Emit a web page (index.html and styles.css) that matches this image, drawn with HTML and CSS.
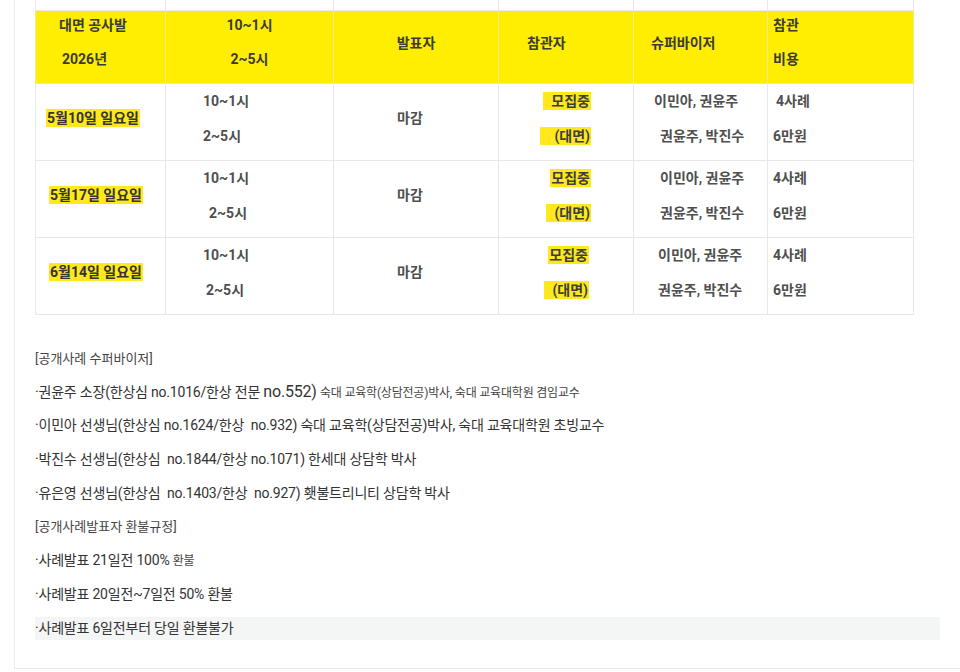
FILE: index.html
```html
<!DOCTYPE html>
<html lang="ko">
<head>
<meta charset="utf-8">
<link rel="stylesheet" href="styles.css">
</head>
<body>
<div class="page">
  <table class="sched">
    <colgroup>
      <col class="c1"><col class="c2"><col class="c3"><col class="c4"><col class="c5"><col class="c6">
    </colgroup>
    <tr class="stub"><td></td><td></td><td></td><td></td><td></td><td></td></tr>
    <tr class="head">
      <th class="h1"><div class="two">대면 공사발<br><span class="in1">2026년</span></div></th>
      <th class="h2"><div class="two">10~1시<br>2~5시</div></th>
      <th class="h3 one">발표자</th>
      <th class="h4 one">참관자</th>
      <th class="h5 one">슈퍼바이저</th>
      <th class="h6"><div class="two">참관<br>비용</div></th>
    </tr>
    <tr class="row">
      <td class="date one"><span class="hl">5월10일 일요일</span></td>
      <td class="time">10~1시<br>2~5시</td>
      <td class="stat one">마감</td>
      <td class="obs"><span class="hl">&nbsp;&nbsp;모집중</span><br><span class="hl">&nbsp;&nbsp;&nbsp;&nbsp;(대면)</span></td>
      <td class="sup">이민아, 권윤주<br><span class="in2">권윤주, 박진수</span></td>
      <td class="fee"><span class="in1">4사례</span><br>6만원</td>
    </tr>
    <tr class="row">
      <td class="date one d2"><span class="hl">5월17일 일요일</span></td>
      <td class="time">10~1시<br><span class="in2">2~5시</span></td>
      <td class="stat one">마감</td>
      <td class="obs"><span class="hl">모집중</span><br><span class="hl">&nbsp;&nbsp;(대면)</span></td>
      <td class="sup"><span class="in2">이민아, 권윤주</span><br><span class="in2">권윤주, 박진수</span></td>
      <td class="fee">4사례<br>6만원</td>
    </tr>
    <tr class="row">
      <td class="date one d2"><span class="hl">6월14일 일요일</span></td>
      <td class="time">10~1시<br><span class="in1">2~5시</span></td>
      <td class="stat one">마감</td>
      <td class="obs o3"><span class="hl">모집중</span><br><span class="hl">&nbsp;&nbsp;(대면)</span></td>
      <td class="sup s3">이민아, 권윤주<br>권윤주, 박진수</td>
      <td class="fee">4사례<br>6만원</td>
    </tr>
  </table>

  <div class="notes">
    <p class="title">[공개사례 수퍼바이저]</p>
    <p>·권윤주 소장(한상심 no.1016/한상 전문 <span class="big">no.552)</span> <span class="small">숙대 교육학(상담전공)박사, 숙대 교육대학원 겸임교수</span></p>
    <p>·이민아 선생님(한상심 no.1624/한상&nbsp; no.932) 숙대 교육학(상담전공)박사, 숙대 교육대학원 초빙교수</p>
    <p>·박진수 선생님(한상심&nbsp; no.1844/한상 no.1071) 한세대 상담학 박사</p>
    <p>·유은영 선생님(한상심&nbsp; no.1403/한상&nbsp; no.927) 횃불트리니티 상담학 박사</p>
    <p class="title">[공개사례발표자 환불규정]</p>
    <p>·사례발표 21일전 100% <span class="small">환불</span></p>
    <p>·사례발표 20일전~7일전 50% 환불</p>
    <p class="shaded">·사례발표 6일전부터 당일 환불불가</p>
  </div>
</div>
</body>
</html>
```

FILE: styles.css
```css
html, body {
  margin: 0;
  padding: 0;
  background: #ffffff;
}

body {
  font-family: Roboto, "Noto Sans CJK KR", "Noto Sans", sans-serif;
  color: #333;
}

.page {
  margin-left: 14px;
  width: calc(100% - 14px);
  height: 669px;
  border-left: 1px solid #ececec;
  border-bottom: 1px solid #e8e8e8;
  padding: 0 0 0 20px;
  box-sizing: border-box;
  overflow: hidden;
}

.sched {
  border-collapse: collapse;
  table-layout: fixed;
  width: 878px;
  font-size: 14px;
}

.c1 { width: 130px; }
.c2 { width: 168px; }
.c3 { width: 165px; }
.c4 { width: 135px; }
.c5 { width: 134px; }
.c6 { width: 146px; }

.sched td, .sched th {
  border: 1px solid #e8e8e8;
  padding: 0;
  vertical-align: top;
  text-align: left;
  line-height: 35px;
  white-space: nowrap;
}

.stub { height: 10px; }
.stub td { border-top: none; }

.head { height: 73px; }

.head th {
  background: #ffee00;
  color: #3b3b3b;
  font-weight: 700;
  line-height: 34px;
  border-color: #f4ec8a;
}

.head .two { margin-top: -3px; }
.head th.one { padding-top: 15px; }

.h1 { padding-left: 23px !important; }
.h2 { text-align: center !important; }
.h3 { text-align: center !important; }
.h4 { padding-left: 28px !important; }
.h5 { padding-left: 17px !important; }
.h6 { padding-left: 5px !important; }

.row { height: 77px; }

.row td {
  color: #4f4f4f;
  font-weight: 700;
}

.row td.one { padding-top: 17px; }

.in1 { padding-left: 3px; }
.in2 { padding-left: 6px; }

.hl {
  background: #ffe81c;
  color: #3d3d3d;
  padding: 1px 1px;
}

.date { padding-left: 10px !important; }
.date.d2 { padding-left: 13px !important; }
.date .hl { color: #333; }

.time { padding-left: 37px !important; }

.stat {
  text-align: center !important;
  padding-right: 12px !important;
}

.obs {
  text-align: right !important;
  padding-right: 42px !important;
}
.obs.o3 { padding-right: 44px !important; }

.sup { padding-left: 20px !important; }
.sup.s3 { padding-left: 24px !important; }

.fee { padding-left: 5px !important; }

.notes {
  margin-top: 32px;
  width: 905px;
}

.notes p {
  margin: 0 0 10.75px 0;
  height: 23px;
  line-height: 23px;
  font-size: 14px;
  letter-spacing: -0.2px;
  color: #333;
  white-space: nowrap;
}

.notes p.title {
  font-size: 13px;
  letter-spacing: 0;
  color: #444;
}

.big { font-size: 16px; }
.small { font-size: 12px; color: #444; }

.notes p.shaded {
  background: #f4f5f5;
}
```
